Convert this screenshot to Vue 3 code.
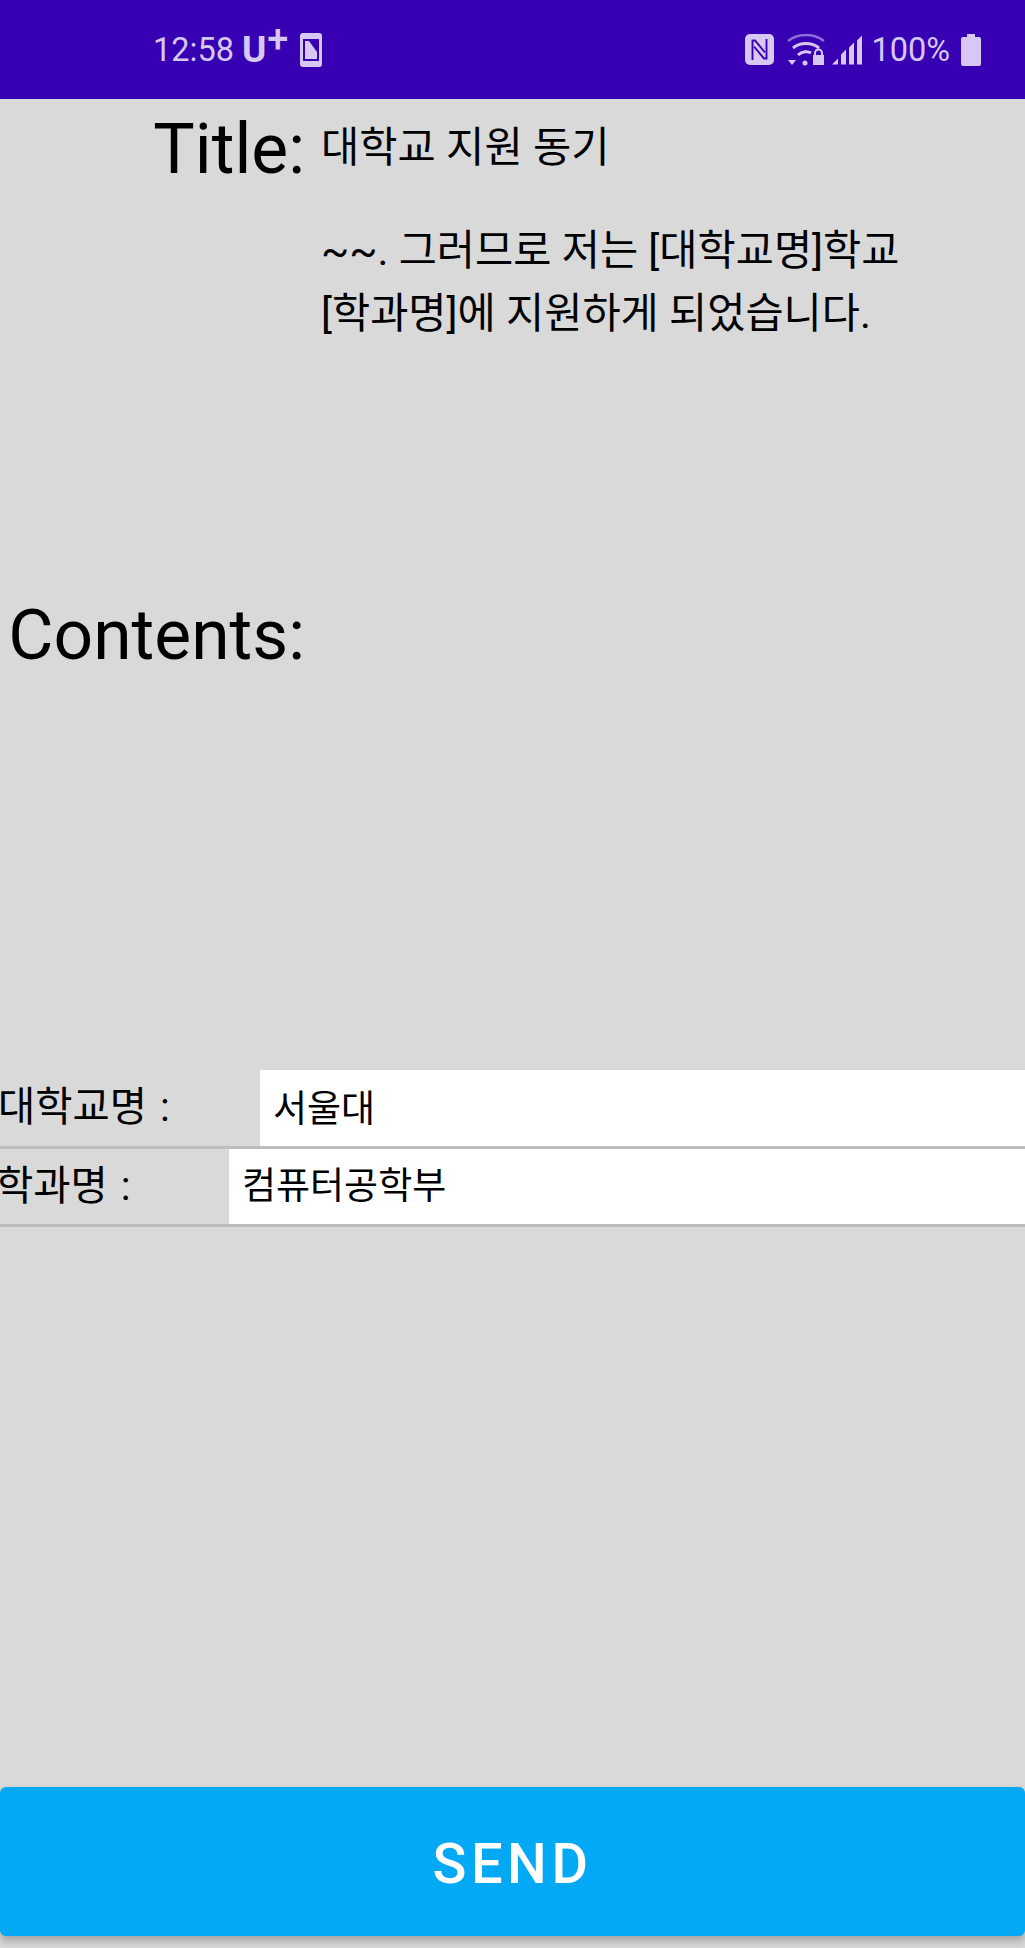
<script setup>
const bars = [
  'M0 27 L6 21 V27 Z',
  'M9 27 V17 L14 12 V27 Z',
  'M17 27 V10 L22 5 V27 Z',
  'M25 27 V3 L30 -2 V27 Z'
]
</script>

<template>
  <div class="page">
    <header class="status">
      <div class="status-left">
        <span class="clock">12:58</span>
        <span class="carrier">U<sup>+</sup></span>
        <svg class="sim" width="22" height="34" viewBox="0 0 22 34">
          <path fill="#d6c8f2" fill-rule="evenodd" d="M3 0H19A3 3 0 0 1 22 3V31A3 3 0 0 1 19 34H3A3 3 0 0 1 0 31V3A3 3 0 0 1 3 0ZM3 6V28H19V6Z" />
          <path fill="#d6c8f2" d="M5 8H9L17 19V26H5Z" />
        </svg>
      </div>
      <div class="status-right">
        <svg width="29" height="31" viewBox="0 0 29 31">
          <rect width="29" height="31" rx="5" fill="#d6c8f2" />
          <path d="M7.5 26V6.5H10L20 18.5" fill="none" stroke="#3700b3" stroke-width="1.9" />
          <path d="M21.5 5V24.5H19L9 12.5" fill="none" stroke="#3700b3" stroke-width="1.9" />
        </svg>
        <svg class="wifi" width="38" height="32" viewBox="0 0 38 32">
          <path d="M1 7C11 -1 27 -1 37 7" fill="none" stroke="#d6c8f2" stroke-opacity=".55" stroke-width="2.5" />
          <path d="M6 14C13 8 25 8 32 14" fill="none" stroke="#d6c8f2" stroke-width="3" />
          <path d="M11 21C15 17 21 17 24 19" fill="none" stroke="#d6c8f2" stroke-width="3" />
          <circle cx="18" cy="29" r="2.5" fill="#d6c8f2" />
          <path d="M1 26H9L5 31Z" fill="#d6c8f2" />
          <path d="M26 21H37V31H26Z" fill="#d6c8f2" />
          <path d="M28 21V19A3.5 3.5 0 0 1 35 19V21" fill="none" stroke="#d6c8f2" stroke-width="2" />
        </svg>
        <svg class="signal" width="31" height="32" viewBox="0 -3 31 31">
          <path v-for="(bar, i) in bars" :key="i" :d="bar" fill="#d6c8f2" />
        </svg>
        <span class="battery-text">100%</span>
        <svg class="battery" width="20" height="32" viewBox="0 0 20 32">
          <path fill="#d6c8f2" d="M6 0H14V3H18A2 2 0 0 1 20 5V30A2 2 0 0 1 18 32H2A2 2 0 0 1 0 30V5A2 2 0 0 1 2 3H6Z" />
        </svg>
      </div>
    </header>

    <main class="content">
      <section class="message">
        <div class="heading-row">
          <h2 class="big-label">Title:</h2>
          <p class="title-value">대학교 지원 동기</p>
        </div>
        <div class="body-row">
          <h2 class="big-label contents-label">Contents:</h2>
          <p class="body-value">~~. 그러므로 저는 [대학교명]학교<br />[학과명]에 지원하게 되었습니다.</p>
        </div>
      </section>

      <section class="form">
        <div class="field uni">
          <span class="field-label">대학교명 :</span>
          <div class="field-input">서울대</div>
        </div>
        <div class="field dept">
          <span class="field-label">학과명 :</span>
          <div class="field-input">컴퓨터공학부</div>
        </div>
      </section>

      <button class="send" type="button">SEND</button>
    </main>
  </div>
</template>

<style>
html, body { margin: 0; padding: 0; }
</style>

<style scoped>
.page {
  width: 1025px;
  height: 1948px;
  display: flex;
  flex-direction: column;
  overflow: hidden;
  background: #d9d9d9;
  font-family: Roboto, "Noto Sans CJK KR", sans-serif;
  color: #000;
}
.status {
  height: 99px;
  flex: none;
  box-sizing: border-box;
  padding: 0 44px 0 153px;
  display: flex;
  align-items: center;
  justify-content: space-between;
  background: #3700b3;
  color: #d6c8f2;
  font-size: 32.5px;
}
.status-left, .status-right { display: flex; align-items: center; }
.carrier {
  margin-left: 8px;
  font-size: 37px;
  font-weight: 700;
  line-height: 1;
  display: flex;
}
.carrier sup { font-size: 38px; font-weight: 500; line-height: 1; margin-top: -11px; margin-left: 1px; }
.sim { margin-left: 12px; }
.wifi { margin-left: 13px; }
.signal { margin-left: 7px; }
.battery-text { margin-left: 8px; }
.battery { margin-left: 11px; }
.content { flex: 1; display: flex; flex-direction: column; }
.heading-row, .body-row {
  display: grid;
  grid-template-columns: 305px 1fr;
  column-gap: 16px;
}
.big-label {
  margin: 0;
  font-size: 69.5px;
  font-weight: 400;
  line-height: 75px;
  text-align: right;
}
.heading-row { height: 120px; padding-top: 13px; box-sizing: border-box; }
.title-value { margin: 0; font-size: 41.6px; line-height: 60px; padding-top: 6px; }
.body-row { height: 851px; box-sizing: border-box; }
.contents-label { margin-top: 379px; }
.body-value { margin: 0; font-size: 41.5px; line-height: 63px; white-space: nowrap; }
.form { display: flex; flex-direction: column; }
.field {
  height: 79px;
  box-sizing: border-box;
  display: flex;
  border-bottom: 3px solid #bdbdbd;
}
.dept { height: 78px; }
.field-label {
  flex: none;
  font-size: 40.5px;
  word-spacing: 3px;
  line-height: 75px;
  white-space: nowrap;
}
.uni .field-label { width: 262px; margin-left: -2px; }
.dept .field-label { width: 233px; margin-left: -4px; }
.field-input {
  flex: 1;
  background: #fff;
  padding-left: 13px;
  font-size: 37px;
  line-height: 75px;
}
.uni .field-input { line-height: 79px; height: 76px; }
.send {
  margin-top: auto;
  margin-bottom: 12px;
  padding: 5px 0 0;
  height: 149px;
  width: 1025px;
  flex: none;
  border: 0;
  border-radius: 6px;
  background: #03a9f4;
  color: #fff;
  font-family: Roboto, sans-serif;
  font-size: 56px;
  font-weight: 500;
  letter-spacing: 4.6px;
  box-shadow: 0 5px 8px rgba(0, 0, 0, .25);
}
</style>
